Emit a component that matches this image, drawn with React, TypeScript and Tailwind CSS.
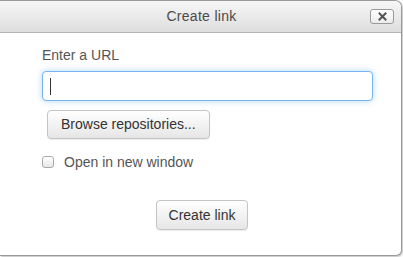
import React from "react"

const FONT = { fontFamily: '"Liberation Sans", Arial, Helvetica, sans-serif' }

export default function App() {
  return (
    <div className="w-[403px] h-[257px] bg-white overflow-hidden" style={FONT}>
      <div className="w-[402px] h-[256px] flex flex-col border-t border-r border-b border-[#9a9a9a] rounded-tr-[7px] rounded-br-[6px] overflow-hidden bg-white shadow-[1px_1px_2px_rgba(0,0,0,0.25)]">
        {/* Header */}
        <div className="relative h-[32px] shrink-0 flex items-center justify-center border-b border-[#b5b5b5] bg-gradient-to-b from-[#f6f6f6] to-[#dedede]">
          <span className="text-[14px] text-[#4a4a4a] tracking-[0.3px] pl-[2px]">Create link</span>
          <button className="absolute right-[7px] top-[8px] w-[24px] h-[15px] flex items-center justify-center rounded-[3px] border border-[#9a9a9a] bg-gradient-to-b from-white to-[#ececec]">
            <svg width="9" height="9" viewBox="0 0 9 9">
              <path d="M1.5 1.5 L7.5 7.5 M7.5 1.5 L1.5 7.5" stroke="#555" strokeWidth="2" strokeLinecap="square" />
            </svg>
          </button>
        </div>

        {/* Body */}
        <div className="flex flex-col pl-[42px] pr-[28px]">
          <label className="text-[14px] leading-[16px] text-[#555] mt-[14px]">Enter a URL</label>
          <div className="mt-[8px] h-[30px] w-[331px] rounded-[4px] border border-[#7ab3ee] bg-white shadow-[0_0_6px_rgba(82,168,236,0.45)] flex items-center pl-[7px]">
            <span className="w-px h-[17px] bg-[#333]" />
          </div>
          <div className="mt-[9px] pl-[5px]">
            <button className="h-[29px] px-[13px] rounded-[4px] border border-[#c4c4c4] bg-gradient-to-b from-white to-[#e6e6e6] text-[14px] text-[#333] shadow-[0_1px_1px_rgba(0,0,0,0.08)]">
              Browse repositories...
            </button>
          </div>
          <div className="mt-[15px] flex items-center">
            <span className="w-[12px] h-[12px] rounded-[3px] border border-[#a9a9a9] bg-gradient-to-b from-white to-[#e8e8e8]" />
            <span className="ml-[10px] text-[14px] leading-[16px] text-[#555]">Open in new window</span>
          </div>
        </div>
        <div className="mt-[30px] flex justify-center pl-[3px]">
          <button className="h-[30px] w-[92px] rounded-[4px] border border-[#c4c4c4] bg-gradient-to-b from-white to-[#e6e6e6] text-[14px] text-[#333] shadow-[0_1px_1px_rgba(0,0,0,0.08)]">
            Create link
          </button>
        </div>
      </div>
    </div>
  )
}
